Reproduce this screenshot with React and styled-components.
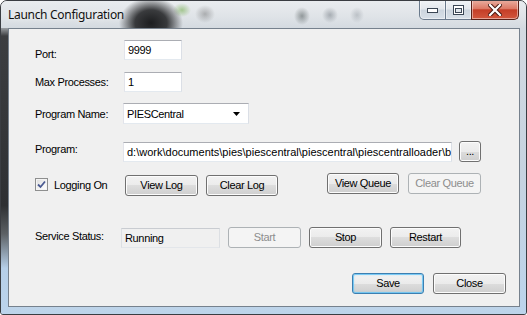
import styled, { createGlobalStyle } from 'styled-components';

const GlobalStyle = createGlobalStyle`
  html, body { margin: 0; padding: 0; background: #fff; }
  body { width: 527px; height: 315px; overflow: hidden; }
  * { box-sizing: border-box; }
`;

const Window = styled.div`
  width: 527px;
  height: 315px;
  display: flex;
  flex-direction: column;
  border: 1px solid #3a3d42;
  border-radius: 7px 7px 3px 3px;
  overflow: hidden;
  background: linear-gradient(180deg, #d9dee3 0%, #cfd7df 40%, #bdd4ea 100%);
`;

const TitleBar = styled.div`
  display: flex;
  align-items: flex-start;
  height: 27px;
  flex-shrink: 0;
  padding-left: 7px;
  background:
    radial-gradient(32px 26px at 150px 22px, rgba(28,29,31,1) 0%, rgba(28,29,31,0.85) 50%, rgba(28,29,31,0) 100%),
    radial-gradient(9px 7px at 181px 9px, rgba(110,170,70,0.55), rgba(110,170,70,0)),
    radial-gradient(10px 9px at 204px 13px, rgba(70,70,70,0.35), rgba(70,70,70,0)),
    radial-gradient(8px 9px at 301px 15px, rgba(50,60,60,0.45), rgba(50,60,60,0)),
    radial-gradient(8px 8px at 329px 14px, rgba(60,70,80,0.35), rgba(60,70,80,0)),
    radial-gradient(7px 8px at 356px 14px, rgba(80,90,100,0.25), rgba(80,90,100,0)),
    linear-gradient(180deg, #e9ecef 0%, #e0e4e8 55%, #d4dae0 100%);
`;

const Title = styled.div`
  margin-top: 6px;
  font-family: "Noto Sans", "Open Sans", sans-serif;
  font-size: 12px;
  line-height: 16px;
  color: #111;
  letter-spacing: -0.3px;
  text-shadow: 0 0 6px rgba(255,255,255,0.9);
`;

const Caption = styled.div`
  display: flex;
  margin-left: auto;
  margin-right: 7px;
  margin-top: -1px;
`;

const CapButton = styled.div`
  width: ${p => p.$w}px;
  height: 20px;
  display: flex;
  align-items: center;
  justify-content: center;
  border: 1px solid ${p => (p.$close ? '#5a2118' : '#6a7a8c')};
  border-top: none;
  margin-left: -1px;
  border-radius: ${p => p.$radius};
  background: ${p =>
    p.$close
      ? 'linear-gradient(180deg, #eab0a2 0%, #dc7a66 45%, #c43e27 52%, #d2573e 100%)'
      : 'linear-gradient(180deg, #f1f4f7 0%, #e2e7ec 48%, #ccd5de 52%, #d8e0e8 100%)'};
  box-shadow: inset 0 0 0 1px rgba(255,255,255,0.45);
`;

const Body = styled.div`
  display: flex;
  flex: 1;
  align-items: stretch;
`;

const SideFrame = styled.div`
  width: ${p => p.$w}px;
  flex-shrink: 0;
  background: ${p =>
    p.$left
      ? 'linear-gradient(180deg, #9a9ea2 0px, #3c3e41 8px, #2e3033 62%, #5c6165 72%, #b6cfe8 84%, #bcd4ec 100%)'
      : 'linear-gradient(180deg, #d3dae1 0%, #c6d3e0 50%, #bcd4ec 100%)'};
`;

const Client = styled.div`
  width: 512px;
  height: 279px;
  flex-shrink: 0;
  border: 1px solid #76818d;
  background: #f0f0f0;
  padding: 11px 0 0 26px;
  display: flex;
  flex-direction: column;
  font-family: "Liberation Sans", Arial, sans-serif;
  font-size: 11px;
  letter-spacing: -0.35px;
  color: #000;
`;

const Row = styled.div`
  display: flex;
  align-items: center;
  height: ${p => p.$h || 20}px;
  margin-top: ${p => p.$mt || 0}px;
  padding-right: ${p => p.$pr || 0}px;
  gap: ${p => p.$gap || 0}px;
  justify-content: ${p => (p.$end ? 'flex-end' : 'flex-start')};
`;

const Label = styled.div`
  width: ${p => p.$w}px;
  flex-shrink: 0;
  margin-top: ${p => (p.$shift > 0 ? p.$shift * 2 : 0)}px;
  margin-bottom: ${p => (p.$shift < 0 ? -p.$shift * 2 : 0)}px;
`;

const TextBox = styled.div`
  width: ${p => p.$w}px;
  height: 20px;
  flex-shrink: 0;
  display: flex;
  align-items: center;
  padding-left: 3px;
  background: ${p => (p.$readonly ? '#f0f0f0' : '#fff')};
  border: 1px solid;
  border-color: ${p => (p.$readonly ? '#c9ccd1 #dcdfe3 #e3e6ea #dcdfe3' : '#abadb3 #dbdfe6 #e3e9ef #e2e3ea')};
  white-space: nowrap;
  overflow: hidden;
`;

const PathText = styled.span`
  letter-spacing: 0;
  white-space: nowrap;
`;

const Combo = styled(TextBox)`
  height: 21px;
  justify-content: space-between;
  padding-right: 8px;
`;

const Button = styled.div`
  width: ${p => p.$w}px;
  height: 21px;
  flex-shrink: 0;
  align-self: ${p => p.$align || 'center'};
  display: flex;
  align-items: center;
  justify-content: center;
  border-radius: 3px;
  border: 1px solid ${p => (p.$disabled ? '#adb2b5' : p.$default ? '#3c7fb1' : '#707070')};
  background: ${p =>
    p.$disabled
      ? '#f4f4f4'
      : 'linear-gradient(180deg, #f2f2f2 0%, #ebebeb 50%, #dddddd 50%, #cfcfcf 100%)'};
  box-shadow: ${p =>
    p.$default
      ? 'inset 0 0 0 1px rgba(100,195,245,0.8), inset 0 0 3px rgba(100,195,245,0.6)'
      : `inset 0 0 0 1px ${p.$disabled ? '#f4f4f4' : '#fcfcfc'}`};
  color: ${p => (p.$disabled ? '#8d8d8d' : '#000')};
  padding-bottom: 1px;
`;

const Group = styled.div`
  display: flex;
  gap: ${p => p.$gap}px;
  margin-left: auto;
  align-self: stretch;
`;

const CheckGroup = styled.div`
  width: 82px;
  display: flex;
  align-items: center;
  gap: 6px;
`;

const CheckBox = styled.div`
  width: 13px;
  height: 13px;
  border: 1px solid #8e8f8f;
  background: linear-gradient(135deg, #dcdcdc 0%, #f4f4f4 60%, #ffffff 100%);
  box-shadow: inset 0 0 0 1px #f4f4f4;
  display: flex;
  align-items: center;
  justify-content: center;
`;

function Check() {
  return (
    <svg width="9" height="9" viewBox="0 0 9 9">
      <path d="M1 4.5 L3.5 7 L8 1.5" fill="none" stroke="#4a5a92" strokeWidth="1.8" />
    </svg>
  );
}

function Arrow() {
  return (
    <svg width="7" height="4" viewBox="0 0 7 4">
      <path d="M0 0 H7 L3.5 4 Z" fill="#000" />
    </svg>
  );
}

function MinGlyph() {
  return (
    <svg width="11" height="6" viewBox="0 0 11 6">
      <rect x="0.5" y="1.5" width="10" height="4" fill="#fff" stroke="#3a4654" />
    </svg>
  );
}

function MaxGlyph() {
  return (
    <svg width="11" height="10" viewBox="0 0 11 10">
      <rect x="0.5" y="0.5" width="10" height="9" fill="#fff" stroke="#3a4654" />
      <rect x="2.5" y="3.5" width="6" height="4" fill="#dfe5eb" stroke="#3a4654" />
    </svg>
  );
}

function CloseGlyph() {
  return (
    <svg width="14" height="12" viewBox="0 0 14 12">
      <path d="M2 1 L12 11 M12 1 L2 11" stroke="#4a1a12" strokeWidth="4.2" strokeLinecap="square" />
      <path d="M2 1 L12 11 M12 1 L2 11" stroke="#fff" strokeWidth="2.2" strokeLinecap="square" />
    </svg>
  );
}

export default function App() {
  return (
    <>
      <GlobalStyle />
      <Window>
        <TitleBar>
          <Title>Launch Configuration</Title>
          <Caption>
            <CapButton $w={27} $radius="0 0 0 5px"><MinGlyph /></CapButton>
            <CapButton $w={27} $radius="0"><MaxGlyph /></CapButton>
            <CapButton $w={48} $radius="0 0 5px 0" $close><CloseGlyph /></CapButton>
          </Caption>
        </TitleBar>
        <Body>
          <SideFrame $w={7} $left />
          <Client>
            <Row>
              <Label $w={89} $shift={4}>Port:</Label>
              <TextBox $w={58}>9999</TextBox>
            </Row>
            <Row $mt={12}>
              <Label $w={89}>Max Processes:</Label>
              <TextBox $w={58}>1</TextBox>
            </Row>
            <Row $mt={11} $h={21}>
              <Label $w={88}>Program Name:</Label>
              <Combo $w={126}>
                PIESCentral
                <Arrow />
              </Combo>
            </Row>
            <Row $mt={17} $h={21} $gap={7}>
              <Label $w={81} $shift={-3}>Program:</Label>
              <TextBox $w={329}>
                <PathText>d:\work\documents\pies\piescentral\piescentral\piescentralloader\b</PathText>
              </TextBox>
              <Button $w={22}>...</Button>
            </Row>
            <Row $mt={11} $h={23} $gap={8} $pr={38}>
              <CheckGroup>
                <CheckBox><Check /></CheckBox>
                Logging On
              </CheckGroup>
              <Button $w={73} $align="flex-end">View Log</Button>
              <Button $w={72} $align="flex-end">Clear Log</Button>
              <Group $gap={9}>
                <Button $w={72} $align="flex-start">View Queue</Button>
                <Button $w={73} $align="flex-start" $disabled>Clear Queue</Button>
              </Group>
            </Row>
            <Row $mt={31} $h={21} $gap={8}>
              <Label $w={78} $shift={-2}>Service Status:</Label>
              <TextBox $w={99} $readonly>Running</TextBox>
              <Button $w={73} $disabled>Start</Button>
              <Button $w={73}>Stop</Button>
              <Button $w={71}>Restart</Button>
            </Row>
            <Row $mt={25} $h={21} $gap={9} $pr={13} $end>
              <Button $w={72} $default>Save</Button>
              <Button $w={73}>Close</Button>
            </Row>
          </Client>
          <SideFrame $w={6} />
        </Body>
      </Window>
    </>
  );
}
